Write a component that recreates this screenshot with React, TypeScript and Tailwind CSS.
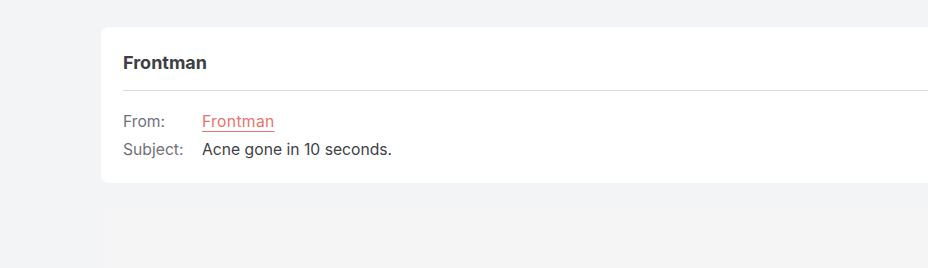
import React from 'react';

const rows = [
  { label: 'From:', value: 'Frontman', link: true },
  { label: 'Subject:', value: 'Acne gone in 10 seconds.', link: false },
];

export default function App() {
  return (
    <div className="h-[268px] w-[928px] overflow-hidden bg-[#f3f4f6] font-['Inter',sans-serif]">
      <div className="ml-[101px] pt-[27px] w-[900px]">
        <div className="bg-white rounded-lg px-[22px] pt-[22px] pb-[23px]">
          <h1 className="text-lg leading-7 font-bold text-[#3f3f46] pb-[13px] border-b border-[#d9d9de]">
            Frontman
          </h1>
          <div className="pt-[21px] flex flex-col gap-[8px] text-[15.7px] leading-5">
            {rows.map(r => (
              <div key={r.label} className="flex">
                <span className="w-[79px] text-[#71717a]">{r.label}</span>
                {r.link ? (
                  <a href="#" className="text-[#e5736f] underline underline-offset-[4px] decoration-[#e5736f] tracking-[0.02em]">{r.value}</a>
                ) : (
                  <span className="text-[#3f3f46]">{r.value}</span>
                )}
              </div>
            ))}
          </div>
        </div>
        <div className="mt-[24px] ml-[2px] h-[80px] bg-[#f5f5f5]" />
      </div>
    </div>
  );
}
